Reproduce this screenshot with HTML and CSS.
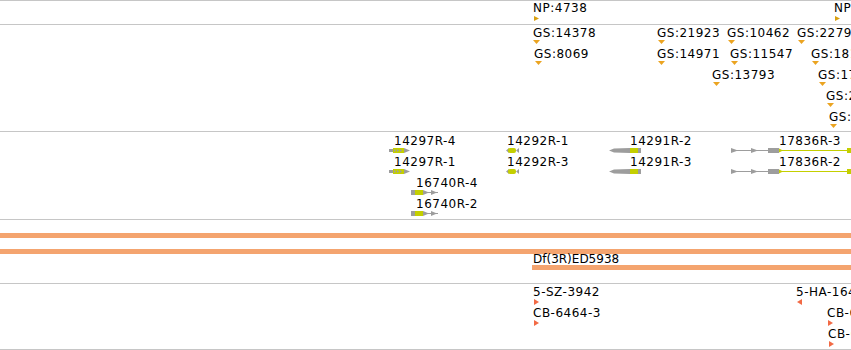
FILE: index.html
```html
<!DOCTYPE html>
<html lang="en">
<head>
    <meta charset="UTF-8">
    <title>Track View</title>
    <link rel="stylesheet" href="styles.css">
</head>
<body>
    <div class="tracks">
        <div class="track track-np" id="trackNp"></div>
        <div class="track track-gs" id="trackGs"></div>
        <div class="track track-genes" id="trackGenes"></div>
        <div class="track track-df">
            <div class="df-bar"></div>
            <div class="df-bar df-bar-second"></div>
            <div class="df-feature">
                <div class="df-label">Df(3R)ED5938</div>
                <div class="df-bar"></div>
            </div>
        </div>
        <div class="track track-probes" id="trackProbes"></div>
    </div>

    <script>
        const GRAY = '#9d9d9d';
        const GREEN = '#c4cf00';

        const GLYPHS = {
            np: '<svg width="6" height="6"><polygon points="0,0 5,2.5 0,5" fill="#d9a010"/></svg>',
            gs: '<svg width="8" height="5"><polygon points="0,0 7,0 3.5,4" fill="#eba421"/></svg>',
            probeR: '<svg width="6" height="7"><polygon points="0,0 5,3 0,6" fill="#f26a45"/></svg>',
            probeL: '<svg width="6" height="7"><polygon points="5,0 0,3 5,6" fill="#f26a45"/></svg>',
            g14297: '<svg width="22" height="6">' +
                '<rect x="0" y="1" width="4" height="3" fill="' + GRAY + '"/>' +
                '<rect x="4" y="0" width="11" height="5" fill="' + GREEN + '"/>' +
                '<polygon points="5,1 7,2.5 5,4" fill="' + GRAY + '"/>' +
                '<polygon points="8,1 10,2.5 8,4" fill="' + GRAY + '"/>' +
                '<polygon points="11,1 13,2.5 11,4" fill="' + GRAY + '"/>' +
                '<polygon points="15,0 21,2.5 15,5" fill="' + GRAY + '"/></svg>',
            g14292: '<svg width="14" height="6">' +
                '<polygon points="0,2.5 3,0 3,5" fill="' + GRAY + '"/>' +
                '<rect x="2" y="0" width="8" height="5" rx="2" fill="' + GREEN + '"/>' +
                '<polygon points="13,0 10,2.5 13,5" fill="' + GRAY + '"/></svg>',
            g14291: '<svg width="33" height="6">' +
                '<polygon points="0,2.5 5,0.5 21,0 21,5 5,4.5" fill="' + GRAY + '"/>' +
                '<rect x="21" y="0" width="8" height="5" fill="' + GREEN + '"/>' +
                '<rect x="29" y="0" width="3" height="5" fill="' + GRAY + '"/></svg>',
            g16740: '<svg width="29" height="6">' +
                '<rect x="0" y="0" width="4" height="5" fill="' + GRAY + '"/>' +
                '<rect x="4" y="0" width="8" height="5" fill="' + GREEN + '"/>' +
                '<rect x="12" y="2" width="15" height="1" fill="' + GRAY + '"/>' +
                '<polygon points="12,0 18,2.5 12,5" fill="' + GRAY + '"/>' +
                '<polygon points="20,0 26,2.5 20,5" fill="' + GRAY + '"/></svg>',
            g17836: '<svg width="121" height="6">' +
                '<rect x="0" y="2" width="38" height="1" fill="' + GRAY + '"/>' +
                '<polygon points="0,0 7,2.5 0,5" fill="' + GRAY + '"/>' +
                '<polygon points="20,0 27,2.5 20,5" fill="' + GRAY + '"/>' +
                '<rect x="37" y="0" width="11" height="5" fill="' + GRAY + '"/>' +
                '<rect x="48" y="2" width="70" height="1" fill="' + GREEN + '"/>' +
                '<polygon points="48,0.5 52,2.5 48,4.5" fill="' + GREEN + '"/>' +
                '<rect x="116" y="0" width="4" height="5" fill="' + GREEN + '"/></svg>'
        };

        // label x, glyph x, row
        const TRACKS = [
            { id: 'trackNp', labelTop: 0, glyphTop: 15, features: [
                ['NP:4738', 533, 534, 0, 'np'],
                ['NP:4739', 834, 835, 0, 'np']
            ]},
            { id: 'trackGs', labelTop: 1, glyphTop: 15, features: [
                ['GS:14378', 533, 533, 0, 'gs'],
                ['GS:21923', 657, 658, 0, 'gs'],
                ['GS:10462', 727, 728, 0, 'gs'],
                ['GS:22798', 797, 798, 0, 'gs'],
                ['GS:8069', 534, 535, 1, 'gs'],
                ['GS:14971', 657, 658, 1, 'gs'],
                ['GS:11547', 730, 731, 1, 'gs'],
                ['GS:18126', 811, 812, 1, 'gs'],
                ['GS:13793', 712, 713, 2, 'gs'],
                ['GS:17703', 818, 819, 2, 'gs'],
                ['GS:25410', 826, 827, 3, 'gs'],
                ['GS:19862', 829, 830, 4, 'gs']
            ]},
            { id: 'trackGenes', labelTop: 2, glyphTop: 16, features: [
                ['14297R-4', 394, 389, 0, 'g14297'],
                ['14292R-1', 507, 506, 0, 'g14292'],
                ['14291R-2', 630, 609, 0, 'g14291'],
                ['17836R-3', 779, 731, 0, 'g17836'],
                ['14297R-1', 394, 389, 1, 'g14297'],
                ['14292R-3', 507, 506, 1, 'g14292'],
                ['14291R-3', 630, 609, 1, 'g14291'],
                ['17836R-2', 779, 731, 1, 'g17836'],
                ['16740R-4', 416, 411, 2, 'g16740'],
                ['16740R-2', 416, 411, 3, 'g16740']
            ]},
            { id: 'trackProbes', labelTop: 1, glyphTop: 15, features: [
                ['5-SZ-3942', 533, 534, 0, 'probeR'],
                ['5-HA-1642', 796, 797, 0, 'probeL'],
                ['CB-6464-3', 533, 534, 1, 'probeR'],
                ['CB-6464-2', 827, 828, 1, 'probeR'],
                ['CB-6464-1', 828, 829, 2, 'probeR']
            ]}
        ];

        const ROW_HEIGHT = 21;

        TRACKS.forEach(track => {
            const el = document.getElementById(track.id);
            track.features.forEach(([name, lx, gx, row, glyph]) => {
                const label = document.createElement('div');
                label.className = 'feature-label';
                label.textContent = name;
                label.style.left = lx + 'px';
                label.style.top = (track.labelTop + row * ROW_HEIGHT) + 'px';
                el.appendChild(label);

                const shape = document.createElement('div');
                shape.className = 'feature-glyph';
                shape.innerHTML = GLYPHS[glyph];
                shape.style.left = gx + 'px';
                shape.style.top = (track.glyphTop + row * ROW_HEIGHT) + 'px';
                el.appendChild(shape);
            });
        });
    </script>
</body>
</html>
```

FILE: styles.css
```css
* {
    margin: 0;
    padding: 0;
    box-sizing: border-box;
}

body {
    font-family: "DejaVu Sans", sans-serif;
    font-size: 12px;
    color: #000;
    background: #fff;
    width: 851px;
    overflow: hidden;
}

.tracks {
    border-top: 1px solid #c6c6c6;
}

.track {
    position: relative;
    overflow: hidden;
    border-bottom: 1px solid #c6c6c6;
}

.track-np {
    height: 24px;
}

.track-gs {
    height: 107px;
}

.track-genes {
    height: 88px;
}

.track-df {
    height: 64px;
    padding-top: 13px;
}

.track-probes {
    height: 66px;
}

.feature-label {
    position: absolute;
    line-height: 14px;
    letter-spacing: 0.5px;
    white-space: nowrap;
}

.feature-glyph {
    position: absolute;
    line-height: 0;
}

.feature-glyph svg {
    display: block;
    overflow: visible;
}

.df-bar {
    height: 5px;
    background: #f4a46f;
}

.df-bar-second {
    margin-top: 11px;
}

.df-feature {
    margin-left: 532px;
}

.df-label {
    line-height: 11px;
    padding-left: 1px;
    white-space: nowrap;
}
```
